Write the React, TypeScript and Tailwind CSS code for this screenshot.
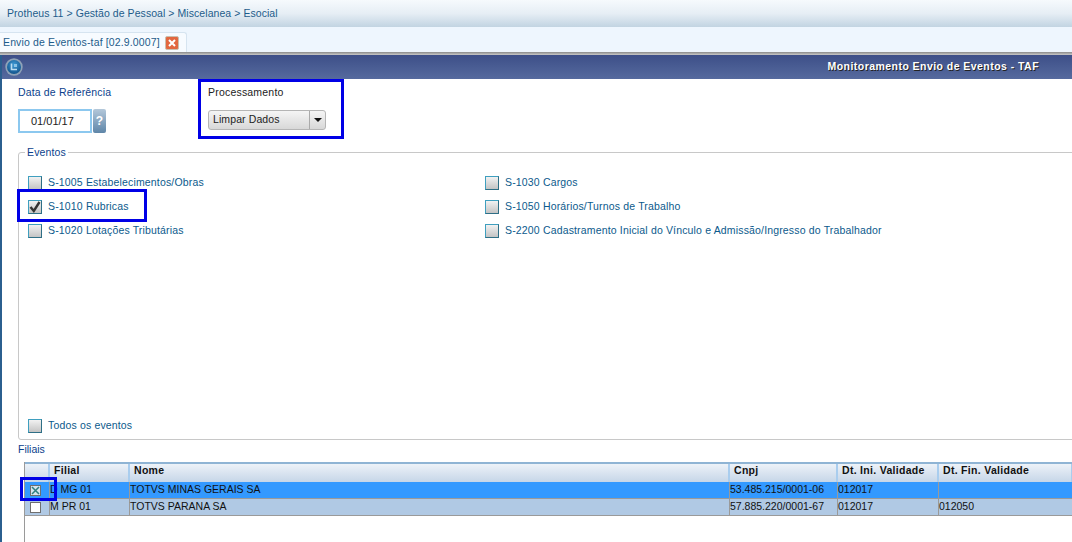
const leftEvents = [
  { label: "S-1005 Estabelecimentos/Obras" },
  { label: "S-1010 Rubricas", checked: true },
  { label: "S-1020 Lotações Tributárias" },
]

const rightEvents = [
  { label: "S-1030 Cargos" },
  { label: "S-1050 Horários/Turnos de Trabalho" },
  { label: "S-2200 Cadastramento Inicial do Vínculo e Admissão/Ingresso do Trabalhador" },
]

const columns = [
  { title: "Filial", className: "w-[80px]" },
  { title: "Nome", className: "w-[600px]" },
  { title: "Cnpj", className: "w-[108px]" },
  { title: "Dt. Ini. Validade", className: "w-[101px]" },
  { title: "Dt. Fin. Validade", className: "w-[134px]" },
]

const rows = [
  { cells: ["D MG 01", "TOTVS MINAS GERAIS SA", "53.485.215/0001-06", "012017", ""], selected: true },
  { cells: ["M PR 01", "TOTVS PARANA SA", "57.885.220/0001-67", "012017", "012050"], selected: false },
]

function EventCheck({ label, checked }: { label: string; checked?: boolean }) {
  return (
    <div className="h-6 flex items-center gap-[6px]">
      <span className="w-[14px] h-[14px] border border-[#2f6f86] border-t-[#3f9fbf] border-l-[#3f9fbf] bg-gradient-to-b from-[#f2f2f2] to-[#c4c4c4] flex items-center justify-center">
        {checked && (
          <svg width="12" height="12" viewBox="0 0 12 12">
            <path d="M1.5 6 L4.8 10 L10.5 1" fill="none" stroke="#333" strokeWidth="2.4" />
          </svg>
        )}
      </span>
      <span className="text-[#0b5a8c] tracking-[0.16px] whitespace-nowrap">{label}</span>
    </div>
  )
}

export default function App() {
  return (
    <div className="relative w-[1072px] h-[542px] overflow-hidden bg-white text-[10.5px] font-['Liberation_Sans',Arial,sans-serif]">
      <div className="h-[27px] bg-gradient-to-b from-[#f6fafd] via-[#e6eef5] to-[#c2d4e2] flex items-center pl-[7px] text-[#1d5c8a] text-[10.5px] tracking-[0.06px]">
        Protheus 11 &gt; Gestão de Pessoal &gt; Miscelanea &gt; Esocial
      </div>

      <div className="h-[25px] bg-[#eef6fe] flex items-end">
        <div className="w-[187px] h-[20px] bg-[#f7fbff] border-t border-r border-[#d6e4f0] rounded-tr-[3px] flex items-center pl-[3px] gap-[5px] text-[#1d5c8a] text-[10.5px]">
          <span className="whitespace-nowrap tracking-[0.14px]">Envio de Eventos-taf [02.9.0007]</span>
          <span className="w-[14px] h-[14px] rounded-[2px] bg-[#e2673f] border border-[#c9c0b0] flex items-center justify-center">
            <svg width="8" height="8" viewBox="0 0 8 8">
              <path d="M1 1 L7 7 M7 1 L1 7" stroke="#fff" strokeWidth="2" />
            </svg>
          </span>
        </div>
      </div>

      <div className="h-[3px] bg-gradient-to-b from-[#8a8a8a] to-[#c9c9c9]" />

      <div className="h-[487px] border-l-2 border-[#2b5f8f]">
        <div className="h-[24px] bg-gradient-to-b from-[#3d4f88] to-[#566a9e] flex items-center justify-between pl-[3px] pr-[33px]">
          <svg width="18" height="18" viewBox="0 0 18 18">
            <defs>
              <radialGradient id="globe" cx="0.5" cy="0.35" r="0.7">
                <stop offset="0" stopColor="#3f9ad6" />
                <stop offset="1" stopColor="#0f4f86" />
              </radialGradient>
            </defs>
            <circle cx="9" cy="9" r="8.7" fill="#8fa3b8" />
            <circle cx="9" cy="9" r="7" fill="url(#globe)" />
            <path d="M6.5 5.5 V11.5 H12" fill="none" stroke="#bcdcf0" strokeWidth="1.6" />
            <path d="M9 6 H12 V9 H9 Z" fill="#8cc4e6" />
          </svg>
          <span className="text-white font-bold text-[10.5px] tracking-[0.45px] [text-shadow:1px_1px_0_#222]">
            Monitoramento Envio de Eventos - TAF
          </span>
        </div>

        <div className="flex pl-4 pt-[6px] h-[66px]">
          <div className="w-[190px]">
            <div className="text-[#0b3f8c] tracking-[0.15px] h-[14px]">Data de Referência</div>
            <div className="flex items-center gap-[1px] mt-[10px]">
              <div className="w-[74px] h-[24px] border-2 border-[#8cc8ef] flex items-center pl-[11px] text-[#222] text-[11px]">01/01/17</div>
              <div className="w-[13px] h-[24px] rounded-[2px] bg-gradient-to-b from-[#b4c8da] to-[#5f86a8] text-white font-bold text-[12px] flex items-center justify-center">?</div>
            </div>
          </div>
          <div>
            <div className="text-[#222] tracking-[0.2px] h-[14px]">Processamento</div>
            <div className="flex w-[118px] h-[20px] mt-[11px] border border-[#b5b5b5] rounded-[3px] bg-gradient-to-b from-[#f5f5f5] to-[#d8d8d8] items-center">
              <span className="flex-1 pl-[4px] text-[#222] tracking-[0.1px]">Limpar Dados</span>
              <span className="w-[16px] h-full border-l border-[#aaa] flex items-center justify-center">
                <span className="w-0 h-0 border-x-[4px] border-x-transparent border-t-[4px] border-t-[#111]" />
              </span>
            </div>
          </div>
        </div>

        <fieldset className="ml-4 w-[1100px] h-[295px] border border-[#c8c8c8] rounded-tl-[3px] rounded-bl-[3px] pl-[9px]">
          <legend className="ml-[-3px] px-[2px] text-[#0b3f8c] tracking-[0.15px]">Eventos</legend>
          <div className="flex mt-[10px]">
            <div className="w-[457px]">
              {leftEvents.map((event) => (
                <EventCheck key={event.label} label={event.label} checked={event.checked} />
              ))}
            </div>
            <div>
              {rightEvents.map((event) => (
                <EventCheck key={event.label} label={event.label} />
              ))}
            </div>
          </div>
          <div className="mt-[171px]">
            <EventCheck label="Todos os eventos" />
          </div>
        </fieldset>

        <div className="pl-4 h-[19px] text-[#0b3f8c] flex items-center">Filiais</div>

        <div className="ml-[22px] w-[1100px] h-[90px] border-l border-[#9a9a9a] mt-[3px]">
          <div className="flex h-[20px] border-t-2 border-[#8fb4d4] bg-gradient-to-b from-[#edf2f8] to-[#c6d6e8] font-bold text-[#111]">
            <div className="w-[25px] border-r-2 border-[#a9cdee]" />
            {columns.map((col) => (
              <div key={col.title} className={`${col.className} border-r-2 border-[#a9cdee] pl-[4px] pb-[4px] flex items-center tracking-[0.3px]`}>
                {col.title}
              </div>
            ))}
          </div>
          {rows.map((row) => (
            <div
              key={row.cells[0]}
              className={`flex h-[17px] border-b border-[#9a9a9a] text-[#111] ${row.selected ? "bg-[#3399ff]" : "bg-[#b0c9e4]"}`}
            >
              <div className="w-[25px] border-r border-[#9a9a9a] flex items-center pl-[5px]">
                <span className={`w-[11px] h-[11px] border border-[#6f6f6f] flex items-center justify-center ${row.selected ? "bg-[#d5e4ee]" : "bg-white"}`}>
                  {row.selected && (
                    <svg width="9" height="9" viewBox="0 0 9 9">
                      <path d="M1 1 L8 8 M8 1 L1 8" stroke="#2f7f7f" strokeWidth="1.5" />
                    </svg>
                  )}
                </span>
              </div>
              {row.cells.map((cell, index) => (
                <div key={index} className={`${columns[index].className} border-r border-[#9a9a9a] pl-0 flex items-center whitespace-pre`}>
                  {cell}
                </div>
              ))}
            </div>
          ))}
        </div>
      </div>

      <div className="absolute left-[198px] top-[79px] w-[146px] h-[60px] border-[3px] border-[#0000e6]" />
      <div className="absolute left-[17px] top-[189px] w-[130px] h-[33px] border-[3px] border-[#0000e6]" />
      <div className="absolute left-[20px] top-[477px] w-[37px] h-[24px] border-[3px] border-[#0000e6]" />
    </div>
  )
}
